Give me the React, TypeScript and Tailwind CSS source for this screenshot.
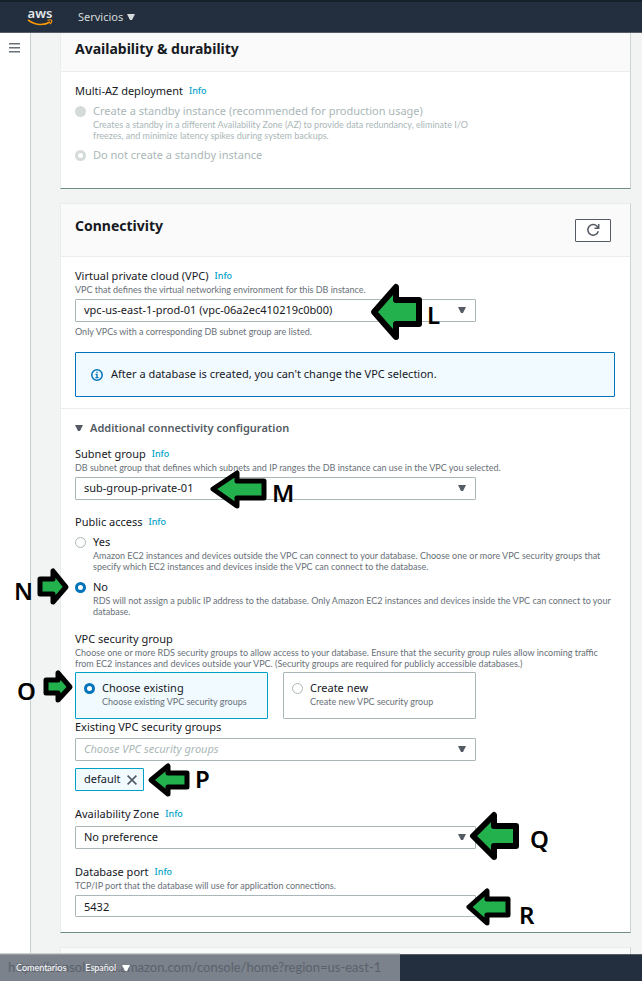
import { useState } from "react";
import type { ReactNode } from "react";

const Caret = ({ className = "" }: { className?: string }) => (
  <svg viewBox="0 0 8 6" className={`h-[6px] w-[8px] shrink-0 fill-current ${className}`} aria-hidden="true">
    <path d="M0 0h8L5 6H3z" />
  </svg>
);

const Info = () => (
  <a href="#info" className="ml-[6px] text-[9px] font-medium text-[#00a1c9]">
    Info
  </a>
);

const Heading = ({ children, htmlFor, info = true }: { children: ReactNode; htmlFor?: string; info?: boolean }) => (
  <div className="flex h-4 items-center text-[11px] leading-4 whitespace-nowrap text-[#16191f]">
    {htmlFor ? <label htmlFor={htmlFor}>{children}</label> : <span>{children}</span>}
    {info && <Info />}
  </div>
);

const Note = ({ children, className = "" }: { children: ReactNode; className?: string }) => (
  <p className={`font-['Lato','Liberation_Sans',sans-serif] text-[9px] leading-[11px] text-[#687078] ${className}`}>
    {children}
  </p>
);

const Select = ({ id, value, placeholder = false }: { id: string; value: string; placeholder?: boolean }) => (
  <div className="relative max-w-[401px]">
    <select
      id={id}
      className={`block h-[23px] w-full appearance-none rounded-[1px] border border-[#aab7b8] bg-white px-2 text-[11px] outline-none ${
        placeholder ? "text-[#aab7b8] italic" : "text-[#16191f]"
      }`}
    >
      <option>{value}</option>
    </select>
    <Caret className="pointer-events-none absolute top-2 right-[10px] text-[#545b64]" />
  </div>
);

const radioBase = "m-0 size-[11px] shrink-0 appearance-none rounded-full";

type RadioProps = {
  id: string;
  name: string;
  title: string;
  note?: ReactNode;
  checked: boolean;
  disabled?: boolean;
  onChange?: () => void;
};

const Radio = ({ id, name, title, note, checked, disabled = false, onChange }: RadioProps) => {
  let tone = "border border-[#aab7b8] bg-white";
  if (disabled) tone = checked ? "border-[3px] border-[#d5dbdb] bg-white" : "bg-[#d5dbdb]";
  else if (checked) tone = "border-[3px] border-[#0073bb] bg-white";
  return (
    <div className="flex gap-[7px]">
      <div className="flex h-4 items-center">
        <input
          type="radio"
          id={id}
          name={name}
          checked={checked}
          disabled={disabled}
          onChange={() => onChange?.()}
          className={`${radioBase} ${tone}`}
        />
      </div>
      <div className={disabled ? "text-[#aab7b8]" : "text-[#16191f]"}>
        <label htmlFor={id} className="block text-[11px] leading-4">
          {title}
        </label>
        {note && (
          <p
            className={`font-['Lato','Liberation_Sans',sans-serif] text-[9px] leading-[11px] ${
              disabled ? "" : "text-[#687078]"
            }`}
          >
            {note}
          </p>
        )}
      </div>
    </div>
  );
};

const Tile = ({ active, children }: { active: boolean; children: ReactNode }) => (
  <div
    className={`h-[47px] flex-1 rounded-[1px] border px-2 pt-[7px] ${
      active ? "border-[#00a1c9] bg-[#f1faff]" : "border-[#aab7b8] bg-white"
    }`}
  >
    {children}
  </div>
);

const arrows = [
  { points: "374,312 396,287 396,300 419,300 419,324 396,324 396,337", width: 6 },
  { points: "213,489 237,473 237,481 264,481 264,498 237,498 237,506", width: 5 },
  { points: "66,587 53,571 53,579 40,579 40,594 53,594 53,602", width: 5 },
  { points: "70,687 58,673 58,680 46,680 46,693 58,693 58,700", width: 5 },
  { points: "151,780 168,766 168,773 187,773 187,787 168,787 168,794", width: 5 },
  { points: "473,836 494,815 494,826 516,826 516,846 494,846 494,857", width: 6 },
  { points: "469,907 487,891 487,899 508,899 508,915 487,915 487,923", width: 5 },
];

const Annotations = () => (
  <div className="pointer-events-none absolute inset-0 text-2xl leading-[17px] font-semibold text-black">
    <svg className="absolute top-0 left-0 h-[981px] w-[642px]" viewBox="0 0 642 981" aria-hidden="true">
      {arrows.map((a) => (
        <polygon key={a.points} points={a.points} fill="#22b14c" stroke="#000" strokeWidth={a.width} strokeLinejoin="round" />
      ))}
    </svg>
    <span className="absolute top-[306px] left-[427px]">L</span>
    <span className="absolute top-[484px] left-[272px]">M</span>
    <span className="absolute top-[582px] left-[14px]">N</span>
    <span className="absolute top-[682px] left-[17px]">O</span>
    <span className="absolute top-[770px] left-[195px]">P</span>
    <span className="absolute top-[830px] left-[530px]">Q</span>
    <span className="absolute top-[906px] left-[519px]">R</span>
  </div>
);

const cardEdge = "border-t border-r border-t-[#eaeded] border-r-[#cfd4d4] border-l border-l-[#eaeded]";

export default function App() {
  const [access, setAccess] = useState("no");
  const [group, setGroup] = useState("existing");

  return (
    <div className="relative flex min-h-screen flex-col bg-[#f2f3f3] font-['Noto_Sans','Open_Sans',sans-serif] text-[11px] text-[#16191f]">
      <header className="flex h-[33px] items-center border-t-2 border-b border-t-[#16202b] border-b-[#545b64] bg-[#232f3e] pl-[27px] text-[#d5dbdb]">
        <a href="#home" className="flex w-[26px] flex-col items-center" aria-label="AWS">
          <span className="text-[13px] leading-[11px] font-semibold text-[#e4e6e8]">aws</span>
          <svg viewBox="0 0 26 7" className="h-[7px] w-[26px]" fill="none" stroke="#f90" aria-hidden="true">
            <path d="M1 .8C8 6.600 17 6.600 23 3" strokeWidth="1.600" />
            <path d="M20.500 1.200c2-.6 3.600-.5 4 0s-.2 2.500-1.300 4" strokeWidth="1.200" />
          </svg>
        </a>
        <button type="button" className="ml-[25px] flex items-center gap-1 text-[11px]">
          Servicios
          <Caret />
        </button>
      </header>

      <div className="flex flex-1">
        <aside className="w-[31px] shrink-0 border-r border-[#c8cfcf] bg-white">
          <button type="button" aria-label="Menu" className="mt-[10px] ml-[9px] block h-[10px] w-[11px]">
            <svg viewBox="0 0 11 10" className="h-[10px] w-[11px] fill-[#687078]" aria-hidden="true">
              <path d="M0 0h11v1.500H0zM0 4h11v1.500H0zM0 8h11v1.500H0z" />
            </svg>
          </button>
        </aside>

        <main className="flex min-w-0 flex-1 flex-col pr-[11px] pl-[29px]">
          <section className="border-r border-b border-l border-r-[#cfd4d4] border-b-[#6f8c88] border-l-[#eaeded] bg-white">
            <div className="flex h-[39px] items-center border-b border-[#eaeded] bg-[#fafafa] px-[14px] pb-[6px]">
              <h2 className="text-sm font-bold">Availability &amp; durability</h2>
            </div>
            <div className="px-[14px] pt-[11px] pb-[25px]">
              <Heading>Multi-AZ deployment</Heading>
              <div className="mt-1 flex flex-col gap-[6px]">
                <Radio
                  id="az-standby"
                  name="az"
                  title="Create a standby instance (recommended for production usage)"
                  note={
                    <>
                      Creates a standby in a different Availability Zone (AZ) to provide data redundancy, eliminate I/O
                      <br />
                      freezes, and minimize latency spikes during system backups.
                    </>
                  }
                  checked={false}
                  disabled
                />
                <Radio id="az-none" name="az" title="Do not create a standby instance" checked disabled />
              </div>
            </div>
          </section>

          <section className={`mt-[14px] border-b border-b-[#6f8c88] bg-white ${cardEdge}`}>
            <div className="flex h-[53px] items-center justify-between border-b border-[#eaeded] bg-[#fafafa] pr-[19px] pl-[14px]">
              <h2 className="pb-2 text-sm font-bold">Connectivity</h2>
              <button
                type="button"
                aria-label="Refresh"
                className="flex h-[23px] w-[36px] items-center justify-center rounded-[1px] border border-[#545b64] bg-white"
              >
                <svg viewBox="0 0 14 14" className="size-[14px]" fill="none" stroke="#545b64" strokeWidth="1.500" aria-hidden="true">
                  <path d="M12.300 8.200A5.300 5.300 0 1 1 11 3.200L12.600 5" />
                  <path d="M12.700 1v4.300H8.500" />
                </svg>
              </button>
            </div>

            <div className="border-b border-[#eaeded] px-[14px] pt-[11px] pb-[11px]">
              <Heading htmlFor="vpc">Virtual private cloud (VPC)</Heading>
              <Note className="mb-1">VPC that defines the virtual networking environment for this DB instance.</Note>
              <Select id="vpc" value="vpc-us-east-1-prod-01 (vpc-06a2ec410219c0b00)" />
              <Note className="mt-1">Only VPCs with a corresponding DB subnet group are listed.</Note>
              <div className="mt-[15px] mr-px flex h-[45px] items-center gap-2 rounded-[1px] border border-[#0073bb] bg-[#f1faff] px-[15px]">
                <svg viewBox="0 0 12 12" className="size-3" fill="none" stroke="#0073bb" strokeWidth="1.500" aria-hidden="true">
                  <circle cx="6" cy="6" r="5.200" />
                  <path d="M4.600 5.500H6v3M4.400 8.700h3.200M6 2.700v1.400" strokeWidth="1.300" />
                </svg>
                <span>After a database is created, you can't change the VPC selection.</span>
              </div>
            </div>

            <div className="px-[14px] pt-[11px] pb-[15px]">
              <button type="button" className="flex h-4 items-center gap-[7px] text-[11px] font-semibold text-[#545b64]">
                <Caret />
                Additional connectivity configuration
              </button>

              <div className="mt-[10px]">
                <Heading htmlFor="subnet">Subnet group</Heading>
                <Note className="mb-1">
                  DB subnet group that defines which subnets and IP ranges the DB instance can use in the VPC you selected.
                </Note>
                <Select id="subnet" value="sub-group-private-01" />
              </div>

              <div className="mt-[14px]">
                <Heading>Public access</Heading>
                <div className="mt-1 flex flex-col gap-[7px]">
                  <Radio
                    id="access-yes"
                    name="access"
                    title="Yes"
                    note={
                      <>
                        Amazon EC2 instances and devices outside the VPC can connect to your database. Choose one or more VPC security groups that
                        <br />
                        specify which EC2 instances and devices inside the VPC can connect to the database.
                      </>
                    }
                    checked={access === "yes"}
                    onChange={() => setAccess("yes")}
                  />
                  <Radio
                    id="access-no"
                    name="access"
                    title="No"
                    note={
                      <>
                        RDS will not assign a public IP address to the database. Only Amazon EC2 instances and devices inside the VPC can connect to your
                        <br />
                        database.
                      </>
                    }
                    checked={access === "no"}
                    onChange={() => setAccess("no")}
                  />
                </div>
              </div>

              <div className="mt-[14px]">
                <Heading info={false}>VPC security group</Heading>
                <Note>
                  Choose one or more RDS security groups to allow access to your database. Ensure that the security group rules allow incoming traffic
                  <br />
                  from EC2 instances and devices outside your VPC. (Security groups are required for publicly accessible databases.)
                </Note>
                <div className="mt-[3px] flex max-w-[401px] gap-[15px]">
                  <Tile active={group === "existing"}>
                    <Radio
                      id="group-existing"
                      name="group"
                      title="Choose existing"
                      note="Choose existing VPC security groups"
                      checked={group === "existing"}
                      onChange={() => setGroup("existing")}
                    />
                  </Tile>
                  <Tile active={group === "new"}>
                    <Radio
                      id="group-new"
                      name="group"
                      title="Create new"
                      note="Create new VPC security group"
                      checked={group === "new"}
                      onChange={() => setGroup("new")}
                    />
                  </Tile>
                </div>
                <Heading htmlFor="groups" info={false}>
                  Existing VPC security groups
                </Heading>
                <div className="mt-[3px]">
                  <Select id="groups" value="Choose VPC security groups" placeholder />
                </div>
                <span className="mt-[7px] flex h-[23px] w-fit items-center gap-[6px] rounded-[1px] border border-[#00a1c9] bg-[#f1faff] pr-[6px] pl-2">
                  default
                  <button type="button" aria-label="Remove default">
                    <svg viewBox="0 0 10 10" className="size-[10px]" stroke="#545b64" strokeWidth="1.600" aria-hidden="true">
                      <path d="M.6.6l8.800 8.800M9.400.6L.6 9.400" />
                    </svg>
                  </button>
                </span>
              </div>

              <div className="mt-[15px]">
                <Heading htmlFor="zone">Availability Zone</Heading>
                <div className="mt-1">
                  <Select id="zone" value="No preference" />
                </div>
              </div>

              <div className="mt-[15px]">
                <Heading htmlFor="port">Database port</Heading>
                <Note className="mb-1">TCP/IP port that the database will use for application connections.</Note>
                <input
                  id="port"
                  type="text"
                  defaultValue="5432"
                  className="block h-[22px] w-full max-w-[401px] rounded-[1px] border border-[#aab7b8] bg-white px-2 text-[11px] outline-none"
                />
              </div>
            </div>
          </section>

          <section className={`mt-[14px] min-h-[7px] flex-1 bg-[#fafafa] ${cardEdge}`} />
        </main>
      </div>

      <footer className="flex h-[27px] items-center gap-[19px] border-t border-[#545b64] bg-[#232f3e] pl-4 font-['Lato','Liberation_Sans',sans-serif] text-[9px] text-white">
        <a href="#feedback" className="relative z-10">
          Comentarios
        </a>
        <button type="button" className="relative z-10 flex items-center gap-[6px]">
          Español
          <Caret />
        </button>
      </footer>
      <div className="pointer-events-none absolute bottom-0 left-0 flex h-7 w-[400px] items-center border-t border-[#c8cfcf] bg-white/40 pl-2 font-['Lato','Liberation_Sans',sans-serif] text-[13px] whitespace-nowrap text-[#5a616b]">
        https://console.aws.amazon.com/console/home?region=us-east-1
      </div>

      <Annotations />
    </div>
  );
}
